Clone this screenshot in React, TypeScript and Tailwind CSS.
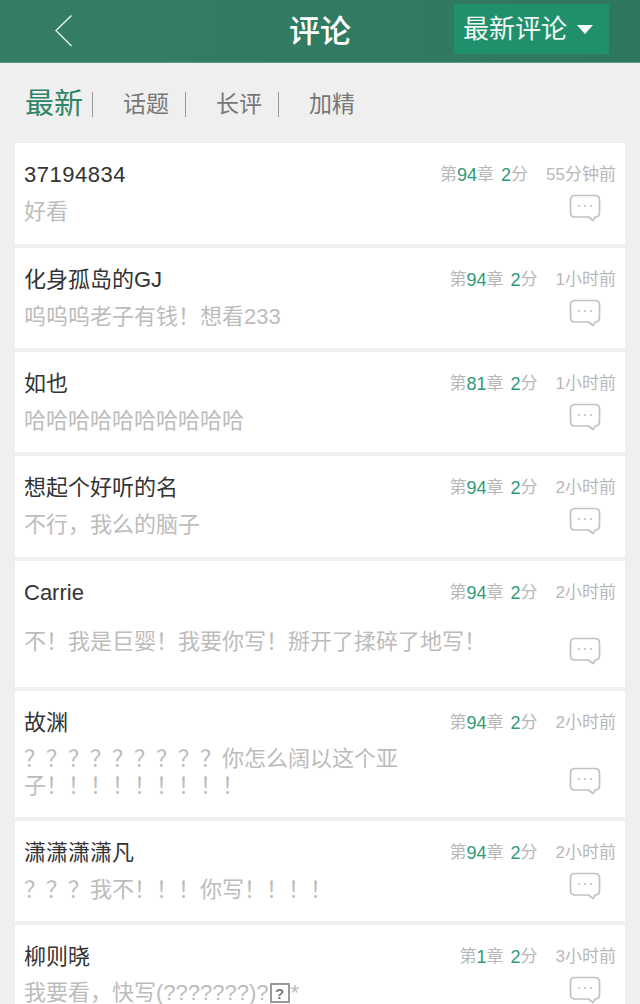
const font = { fontFamily: '"Liberation Sans","Noto Sans CJK SC",sans-serif' };

type Item = { name: string; lines: string[]; ch: string; time: string; h: string; bodyMt: string; iconMt: string; nameCls?: string };

const items: Item[] = [
  { name: "37194834", nameCls: "tracking-[0.5px]", lines: ["好看"], ch: "94", time: "55分钟前", h: "h-[101px]", bodyMt: "mt-[10px]", iconMt: "mt-[8px]" },
  { name: "化身孤岛的GJ", lines: ["呜呜呜老子有钱！想看233"], ch: "94", time: "1小时前", h: "h-[100px]", bodyMt: "mt-[10px]", iconMt: "mt-[8px]" },
  { name: "如也", lines: ["哈哈哈哈哈哈哈哈哈哈"], ch: "81", time: "1小时前", h: "h-[100px]", bodyMt: "mt-[10px]", iconMt: "mt-[8px]" },
  { name: "想起个好听的名", lines: ["不行，我么的脑子"], ch: "94", time: "2小时前", h: "h-[101px]", bodyMt: "mt-[10px]", iconMt: "mt-[8px]" },
  { name: "Carrie", lines: ["不！我是巨婴！我要你写！掰开了揉碎了地写！"], ch: "94", time: "2小时前", h: "h-[126px]", bodyMt: "mt-[22px]", iconMt: "mt-[33px]" },
  { name: "故渊", lines: ["？？？？？？？？？你怎么阔以这个亚", "子！！！！！！！！！"], ch: "94", time: "2小时前", h: "h-[126px]", bodyMt: "mt-[9px]", iconMt: "mt-[33px]" },
  { name: "潇潇潇潇凡", lines: ["？？？我不！！！你写！！！！"], ch: "94", time: "2小时前", h: "h-[100px]", bodyMt: "mt-[10px]", iconMt: "mt-[8px]" },
];

function Bubble() {
  return (
    <svg width="32" height="28" viewBox="0 0 32 28" fill="none" className="block">
      <path d="M6 1.5H26Q30.5 1.5 30.5 6V18.5Q30.5 23 26 23H26.5L24 26.5L19.5 23H6Q1.5 23 1.5 18.5V6Q1.5 1.5 6 1.5Z" stroke="#c2c2c2" strokeWidth="1.7" strokeLinejoin="round" />
      <circle cx="10" cy="12" r="1.1" fill="#c2c2c2" />
      <circle cx="16" cy="12" r="1.1" fill="#c2c2c2" />
      <circle cx="22" cy="12" r="1.1" fill="#c2c2c2" />
    </svg>
  );
}

function Meta({ ch, time }: { ch: string; time: string }) {
  return (
    <div className="flex items-center text-[17px] leading-[22px] text-[#b8b8b8] whitespace-nowrap">
      <span>第</span>
      <span className="text-[18px] text-[#2f9a78]">{ch}</span>
      <span>章</span>
      <span className="ml-[7px] text-[18px] text-[#2f9a78]">2</span>
      <span>分</span>
      <span className="ml-[18px]">{time}</span>
    </div>
  );
}

function Card({ item }: { item: Item }) {
  return (
    <div className={`${item.h} bg-white pl-[9px] pr-[9px] pt-[19px] flex justify-between overflow-hidden`}>
      <div className="min-w-0">
        <div className={`text-[22px] leading-[26px] text-[#333333] ${item.nameCls ?? ""}`}>{item.name}</div>
        <div className={`${item.bodyMt} text-[22px] leading-[27px] text-[#bcbcbc] w-[400px] whitespace-nowrap`}>
          {item.lines.map((l) => (
            <div key={l}>{l}</div>
          ))}
        </div>
      </div>
      <div className="flex flex-col items-end">
        <div className="mt-[2px]"><Meta ch={item.ch} time={item.time} /></div>
        <div className={`${item.iconMt} mr-[15px]`}><Bubble /></div>
      </div>
    </div>
  );
}

const tabs = ["话题", "长评", "加精"];

export default function App() {
  return (
    <div style={font} className="w-[640px] h-[1004px] bg-[#efefef] overflow-hidden">
      <header className="h-[63px] bg-gradient-to-r from-[#357d65] via-[#327b63] to-[#2f7660] flex items-center border-b border-[#5f9a86] relative">
        <div className="w-[76px] flex justify-end pr-[2px]">
          <svg width="20" height="34" viewBox="0 0 20 34" fill="none">
            <path d="M17.5 1.5L2 16.5L17.5 32" stroke="#e6f0ec" strokeWidth="1.4" />
          </svg>
        </div>
        <div className="flex-1 pl-[213px] text-[31px] font-medium leading-none text-white">评论</div>
        <div className="absolute left-[454px] top-[4px] w-[155px] h-[50px] bg-[#1f8f6c] flex items-center pl-[9px] text-[#f0f7f4] text-[26px] leading-none">
          最新评论
          <span className="ml-[10px] w-0 h-0 border-l-[8px] border-r-[8px] border-t-[9px] border-l-transparent border-r-transparent border-t-white" />
        </div>
      </header>

      <nav className="h-[80px] flex items-center pl-[25px] pt-[2px]">
        <span className="text-[29px] leading-none text-[#2f8468]">最新</span>
        <span className="ml-[9px] w-px h-[25px] bg-[#9a9a9a]" />
        {tabs.map((t, i) => (
          <div key={t} className="flex items-center">
            <span className="ml-[30px] text-[23px] leading-none text-[#777777]">{t}</span>
            {i < 2 && <span className="ml-[16px] w-px h-[25px] bg-[#9a9a9a]" />}
          </div>
        ))}
      </nav>

      <main className="mx-[15px] flex flex-col gap-[4px]">
        {items.map((it) => (
          <Card key={it.name} item={it} />
        ))}
        <div className="h-[79px] bg-white pl-[9px] pr-[9px] pt-[19px] flex justify-between overflow-hidden">
          <div>
            <div className="text-[22px] leading-[26px] text-[#333333]">柳则晓</div>
            <div className="mt-[12px] text-[22px] leading-[22px] text-[#bcbcbc] flex items-center whitespace-nowrap">
              我要看，快写(???????)?
              <span className="mx-[1px] w-[20px] h-[20px] border-[2px] border-[#999999] text-[#777777] text-[15px] leading-[15px] font-bold flex items-center justify-center">?</span>
              *
            </div>
          </div>
          <div className="flex flex-col items-end">
            <div className="mt-[2px]"><Meta ch="1" time="3小时前" /></div>
            <div className="mt-[8px] mr-[15px]"><Bubble /></div>
          </div>
        </div>
      </main>
    </div>
  );
}
